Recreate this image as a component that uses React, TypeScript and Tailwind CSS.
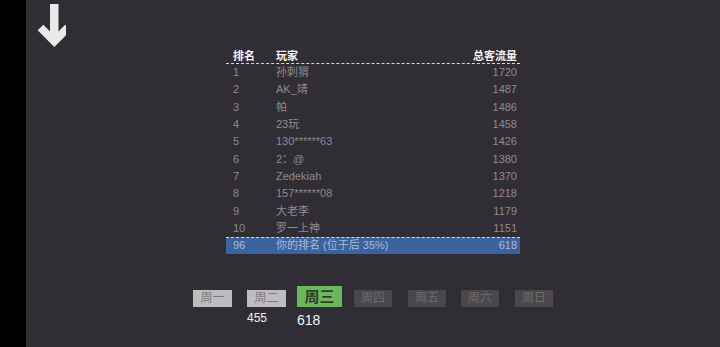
import React from "react";

const rows: [string, string, string][] = [
  ["1", "孙刺猬", "1720"],
  ["2", "AK_靖", "1487"],
  ["3", "帕", "1486"],
  ["4", "23玩", "1458"],
  ["5", "130******63", "1426"],
  ["6", "2：@", "1380"],
  ["7", "Zedekiah", "1370"],
  ["8", "157******08", "1218"],
  ["9", "大老李", "1179"],
  ["10", "罗一上神", "1151"],
];

const font = {
  fontFamily: '"Liberation Sans", "Noto Sans CJK SC", sans-serif',
};

export default function App() {
  return (
    <div className="w-[720px] h-[347px] flex overflow-hidden" style={font}>
      <div className="w-[26px] h-full bg-black" />
      <div className="flex-1 h-full bg-[#312d34] flex flex-col">
        <div className="h-[49px] flex">
          <svg width="40" height="49" viewBox="26 0 40 49" className="ml-0">
            <rect x="50" y="4" width="8.5" height="32" fill="#e9e9e9" />
            <polyline
              points="40.5,27.5 54.25,41.25 68,27.5"
              fill="none"
              stroke="#e9e9e9"
              strokeWidth="8"
              strokeLinejoin="miter"
              strokeMiterlimit="4"
            />
          </svg>
        </div>
        <div className="ml-[200px] w-[294px] flex flex-col">
          <div className="h-[15px] flex items-center text-[11px] font-bold text-[#f2f2f2] border-b border-dashed border-[#d8d8d8] leading-none">
            <div className="w-[50px] pl-[7px]">排名</div>
            <div className="flex-1">玩家</div>
            <div className="pr-[3px]">总客流量</div>
          </div>
          {rows.map((r) => (
            <div
              key={r[0]}
              className="h-[17.3px] flex items-center text-[11px] text-[#8d8b8f] leading-none"
            >
              <div className="w-[50px] pl-[7px]">{r[0]}</div>
              <div className="flex-1">{r[1]}</div>
              <div className="pr-[3px]">{r[2]}</div>
            </div>
          ))}
          <div className="h-[17px] flex items-center text-[11px] text-[#a9bcd6] leading-none bg-[#3b63a0] border-t border-dashed border-[#d8d8d8]">
            <div className="w-[50px] pl-[7px]">96</div>
            <div className="flex-1">你的排名 (位于后 35%)</div>
            <div className="pr-[3px]">618</div>
          </div>
        </div>
        <div className="mt-[32px] ml-[167px] flex items-start">
          <div className="flex flex-col mt-[4px] w-[54px]">
            <div className="w-[39px] h-[17px] bg-[#bdbcbe] text-[#7b7a7d] text-[12px] flex items-center justify-center leading-none">
              周一
            </div>
          </div>
          <div className="flex flex-col mt-[4px] w-[50px]">
            <div className="w-[39px] h-[17px] bg-[#bdbcbe] text-[#7b7a7d] text-[12px] flex items-center justify-center leading-none">
              周二
            </div>
            <div className="text-[12px] text-[#f0f0f0] leading-none mt-[5px]">455</div>
          </div>
          <div className="flex flex-col w-[57px]">
            <div className="w-[45px] h-[21px] bg-[#6cb75c] text-[#2a4226] text-[15px] font-bold flex items-center justify-center leading-none">
              周三
            </div>
            <div className="text-[14px] text-[#f4f4f4] leading-none mt-[6px]">618</div>
          </div>
          {["周四", "周五", "周六", "周日"].map((d, i) => (
            <div key={d} className={"flex flex-col mt-[4px] " + (i === 1 ? "w-[53px]" : "w-[54px]")}>
              <div className="w-[38px] h-[17px] bg-[#4a484c] text-[#6c6b6e] text-[12px] flex items-center justify-center leading-none">
                {d}
              </div>
            </div>
          ))}
        </div>
      </div>
    </div>
  );
}
